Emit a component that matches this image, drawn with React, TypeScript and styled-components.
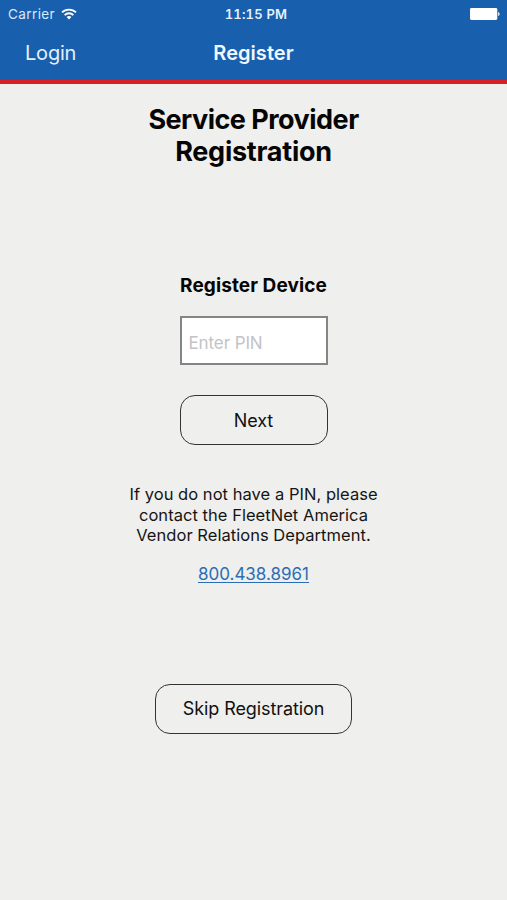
import React from "react";
import styled, { createGlobalStyle } from "styled-components";

const GlobalStyle = createGlobalStyle`
  * { box-sizing: border-box; }
  html, body { margin: 0; background: #efefed; }
  body { font-family: Inter, "Liberation Sans", sans-serif; color: #050505; }
`;

const Screen = styled.div`
  display: flex;
  flex-direction: column;
  width: 507px;
  height: 900px;
  overflow: hidden;
  background: #efefed;
`;

const Header = styled.header`
  height: 84px;
  background: #185fad;
  border-bottom: 4px solid #d91f26;
  box-shadow: inset 0 -1px 0 #99333f;
  color: #fff;
`;

const StatusBar = styled.div`
  display: grid;
  grid-template-columns: 1fr auto 1fr;
  align-items: center;
  height: 27px;
  padding: 0 7px 0 8px;
`;

const Carrier = styled.div`
  display: flex;
  align-items: center;
  gap: 6px;
  color: #d8e9fb;
  font-size: 13.5px;
  letter-spacing: 0.4px;
`;

const Clock = styled.div`
  padding-left: 4px;
  font-size: 13px;
  font-weight: 600;
  font-variant-numeric: tabular-nums;
  letter-spacing: 0.2px;
  color: #e6f1fc;
`;

const BatterySlot = styled.div`
  display: flex;
  justify-content: flex-end;
`;

const NavBar = styled.nav`
  display: grid;
  grid-template-columns: 1fr auto 1fr;
  align-items: center;
  height: 52px;
  padding: 0 25px;
`;

const NavLink = styled.a`
  color: #e4f0fc;
  font-size: 20px;
  letter-spacing: -0.2px;
`;

const NavTitle = styled.div`
  color: #f0f7ff;
  font-size: 20px;
  font-weight: 600;
  letter-spacing: 0.05px;
`;

const Content = styled.main`
  display: flex;
  flex-direction: column;
  align-items: center;
  padding-top: 20px;
`;

const Title = styled.h1`
  margin: 0;
  width: 260px;
  font-size: 27px;
  line-height: 32px;
  font-weight: 700;
  letter-spacing: -0.52px;
  text-align: center;
`;

const TitleEnd = styled.span`
  letter-spacing: -0.25px;
`;

const Subtitle = styled.h2`
  margin: 106px 0 0;
  font-size: 19px;
  line-height: 24px;
  font-weight: 700;
  letter-spacing: 0.1px;
`;

const PinInput = styled.input`
  width: 148px;
  height: 49px;
  margin-top: 18px;
  padding: 4px 7px 0;
  border: 2px solid #858585;
  border-radius: 0;
  background: #fff;
  font: 17px Inter, "Liberation Sans", sans-serif;
  letter-spacing: -0.1px;
  outline: none;
  &::placeholder { color: #c3c3c7; opacity: 1; }
`;

const Button = styled.button<{ $width: number; $top: number }>`
  width: ${(p) => p.$width}px;
  height: 50px;
  margin-top: ${(p) => p.$top}px;
  padding: 0;
  border: 1px solid #333;
  border-radius: 15px;
  background: transparent;
  color: #111;
  font: 18px Inter, "Liberation Sans", sans-serif;
  letter-spacing: -0.1px;
`;

const Help = styled.p`
  margin: 39px 0 0;
  width: 270px;
  font-size: 16.5px;
  line-height: 20.5px;
  letter-spacing: 0.04px;
  text-align: center;
  color: #151515;
`;

const Phone = styled.a`
  margin-top: 17px;
  font-size: 17px;
  line-height: 22px;
  color: #2b6db5;
  text-decoration: underline;
  text-decoration-thickness: 1px;
  text-underline-offset: 2px;
`;

const WifiIcon = () => (
  <svg width="16" height="12" viewBox="0 0 16 12" fill="none" stroke="#fff" strokeWidth="1.9">
    <path d="M1 4.4C4.8.7 11.2.7 15 4.4" />
    <path d="M3.6 7.1c2.5-2.4 6.3-2.4 8.8 0" />
    <path d="M8 11.4 5.6 9c1.3-1.2 3.5-1.2 4.8 0Z" fill="#fff" stroke="none" />
  </svg>
);

const BatteryIcon = () => (
  <svg width="30" height="12" viewBox="0 0 30 12" fill="#fff">
    <rect width="27.3" height="12" rx="1.4" />
    <path d="M28.2 4c1.8.5 1.8 3.5 0 4Z" />
  </svg>
);

export default function App() {
  return (
    <>
      <GlobalStyle />
      <Screen>
        <Header>
          <StatusBar>
            <Carrier>
              Carrier
              <WifiIcon />
            </Carrier>
            <Clock>11:15 PM</Clock>
            <BatterySlot>
              <BatteryIcon />
            </BatterySlot>
          </StatusBar>
          <NavBar>
            <NavLink>Login</NavLink>
            <NavTitle>Register</NavTitle>
          </NavBar>
        </Header>
        <Content>
          <Title>
            Service Provider
            <br />
            <TitleEnd>Registration</TitleEnd>
          </Title>
          <Subtitle>Register Device</Subtitle>
          <PinInput placeholder="Enter PIN" />
          <Button $width={148} $top={30}>Next</Button>
          <Help>
            If you do not have a PIN, please
            <br />
            contact the FleetNet America
            <br />
            Vendor Relations Department.
          </Help>
          <Phone href="tel:8004388961">800.438.8961</Phone>
          <Button $width={197} $top={99}>Skip Registration</Button>
        </Content>
      </Screen>
    </>
  );
}
